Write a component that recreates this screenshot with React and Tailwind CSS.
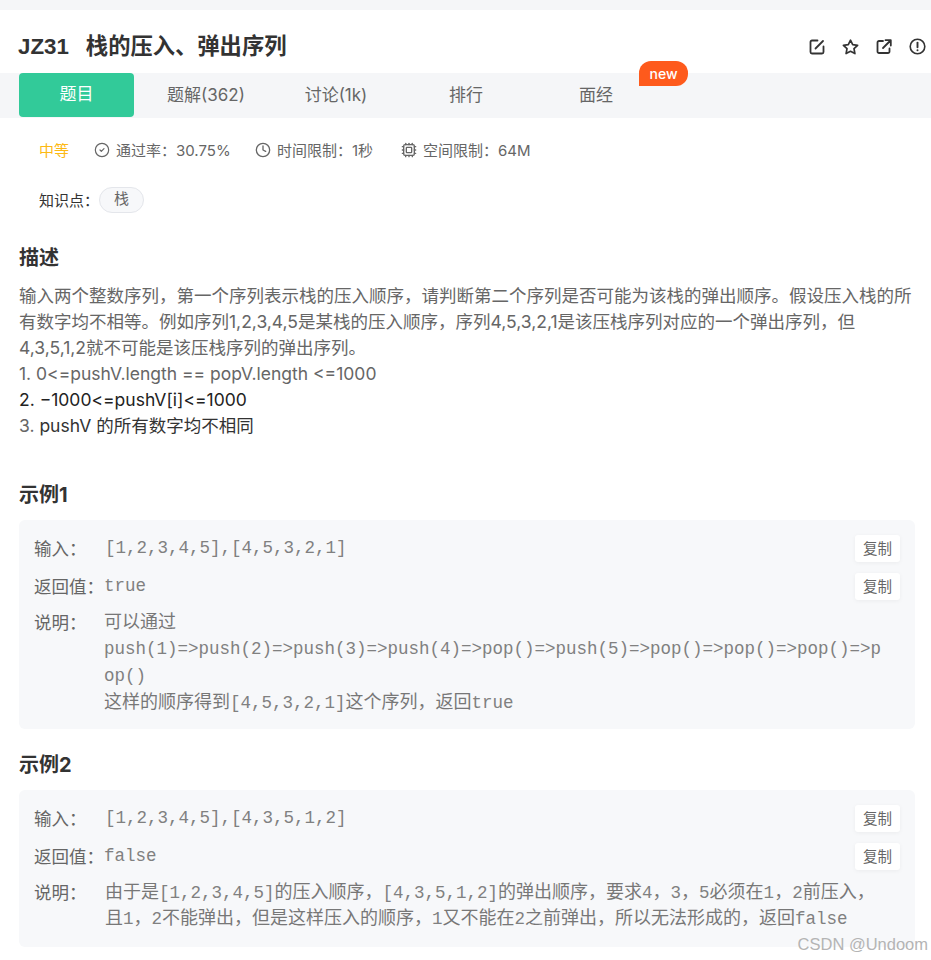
import React from "react";
import { CircleCheck, Clock, Cpu } from "lucide-react";

const sans = "font-['Inter','Noto_Sans_CJK_SC',sans-serif]";
const mono = "font-['Liberation_Mono','Noto_Sans_CJK_SC',monospace]";

const tabs = ["题解(362)", "讨论(1k)", "排行", "面经"];

// header action icons, the lucide ones are too thin and have the wrong shapes
const EditIcon = () => (
  <svg width="16" height="16" viewBox="0 0 16 16" fill="none" stroke="currentColor" strokeWidth="1.8" strokeLinecap="round" strokeLinejoin="round">
    <path d="M8.5 1.5H3A1.5 1.5 0 0 0 1.5 3v10A1.5 1.5 0 0 0 3 14.5h10a1.5 1.5 0 0 0 1.5-1.5V7.5" />
    <path d="M6.5 9.5 14 2" />
  </svg>
);
const StarIcon = () => (
  <svg width="17" height="16" viewBox="0 0 17 16" fill="none" stroke="currentColor" strokeWidth="1.7" strokeLinejoin="round">
    <path d="M8.5 1.2 10.7 5.6 15.6 6.3 12 9.7 12.9 14.6 8.5 12.3 4.1 14.6 5 9.7 1.4 6.3 6.3 5.6Z" />
  </svg>
);
const ShareIcon = () => (
  <svg width="16" height="16" viewBox="0 0 16 16" fill="none" stroke="currentColor" strokeWidth="1.8" strokeLinecap="round" strokeLinejoin="round">
    <path d="M7 2H3A1.5 1.5 0 0 0 1.5 3.5v9A1.5 1.5 0 0 0 3 14h9a1.5 1.5 0 0 0 1.5-1.5V9.5" />
    <path d="M7 9 14.5 1.5M9.5 1.2h5.3v5.3" />
  </svg>
);
const AlertIcon = () => (
  <svg width="17" height="17" viewBox="0 0 17 17" fill="none" stroke="currentColor" strokeWidth="1.6" strokeLinecap="round">
    <circle cx="8.5" cy="8.5" r="7.3" />
    <path d="M8.5 4.6v4.6" strokeWidth="1.9" />
    <path d="M8.5 12.2v.1" strokeWidth="2" />
  </svg>
);

const CopyButton = () => (
  <button className="w-[45px] h-[27px] bg-white rounded-[3px] text-[14.5px] text-[#666] shadow-[0_1px_4px_rgba(0,0,0,0.05)]">
    复制
  </button>
);

const Row = ({ label, children, copy, className }) => (
  <div className={`flex ${className}`}>
    <div className="w-[70px] shrink-0 text-[17.5px] leading-[27px] text-[#666]">{label}</div>
    <div className={`flex-1 text-[#808080] text-[17.5px] ${mono}`}>{children}</div>
    {copy && <CopyButton />}
  </div>
);

const Cn = ({ children }) => <span className="text-[18px] text-[#777]">{children}</span>;

const Example = ({ title, children, className }) => (
  <section>
    <h3 className="text-[20px] leading-[28px] font-bold text-[#333] mb-[11px]">{title}</h3>
    <div className={`bg-[#f7f8fa] rounded-[6px] px-[15px] pt-[15px] ${className}`}>{children}</div>
  </section>
);

export default function App() {
  return (
    <div className={`w-[931px] h-[960px] overflow-hidden bg-white relative ${sans}`}>
      <div className="h-[10px] bg-[#f5f6f8]" />
      <div className="h-[63px] flex items-center justify-between pl-[18px] pr-[5px] pt-[10px]">
        <h1 className="text-[22.3px] font-bold text-[#333] flex gap-[17px] font-['Liberation_Sans','Noto_Sans_CJK_SC',sans-serif]">
          <span>JZ31</span>
          <span>栈的压入、弹出序列</span>
        </h1>
        <div className="flex items-center gap-[17px] text-[#333]">
          <EditIcon />
          <StarIcon />
          <ShareIcon />
          <AlertIcon />
        </div>
      </div>
      <div className="h-[45px] bg-[#f5f6f8] flex pl-[19px] relative">
        <div className="w-[115px] h-[44px] bg-[#32ca99] rounded-[4px] text-white text-[17px] flex items-center justify-center mr-[7px]">题目</div>
        {tabs.map((t) => (
          <div key={t} className="w-[130px] pt-[1px] flex items-center justify-center text-[17px] text-[#666] h-[44px]">{t}</div>
        ))}
        <span className="absolute left-[639px] -top-[12px] w-[49px] h-[25px] bg-[#fe5a1c] text-white text-[14px] font-medium flex items-center justify-center rounded-t-[12px] rounded-br-[12px]">new</span>
      </div>

      <div className="flex items-center h-[66px] pl-[39px] text-[15px] text-[#666]">
        <span className="text-[#fdb913] w-[55px]">中等</span>
        <span className="flex items-center gap-[6px] w-[161px]"><CircleCheck size={16} strokeWidth={1.8} className="-mt-[2px]" />通过率：30.75%</span>
        <span className="flex items-center gap-[6px] w-[146px]"><Clock size={16} strokeWidth={2} className="-mt-[2px]" />时间限制：1秒</span>
        <span className="flex items-center gap-[6px]"><Cpu size={16} strokeWidth={2} className="-mt-[2px]" />空间限制：64M</span>
      </div>
      <div className="flex items-center pl-[39px] text-[15px] text-[#333] h-[26px] mt-[3px] mb-[31px]">
        <span className="pt-[3px]">知识点：</span>
        <span className="w-[45px] h-[26px] pb-[2px] rounded-full border border-[#e4e6eb] bg-[#f7f8fa] text-[#666] flex items-center justify-center">栈</span>
      </div>

      <div className="pl-[19px] pr-[16px]">
        <h3 className="text-[20px] leading-[28px] font-bold text-[#333]">描述</h3>
        <div className="mt-[11px] text-[17.5px] leading-[26px] text-[#666]">
          <p>输入两个整数序列，第一个序列表示栈的压入顺序，请判断第二个序列是否可能为该栈的弹出顺序。假设压入栈的所有数字均不相等。例如序列1,2,3,4,5是某栈的压入顺序，序列4,5,3,2,1是该压栈序列对应的一个弹出序列，但4,3,5,1,2就不可能是该压栈序列的弹出序列。</p>
          <p>1. 0&lt;=pushV.length == popV.length &lt;=1000</p>
          <p className="text-[#222]">2. −1000&lt;=pushV[i]&lt;=1000</p>
          <p className="text-[#333]"><span className="text-[#666]">3. </span>pushV 的所有数字均不相同</p>
        </div>

        <div className="mt-[42px] flex flex-col gap-[22px]">
          <Example title="示例1" className="pb-[13px]">
            <Row label="输入：" copy className="mb-[11px]">
              <span className="pl-[1px] leading-[27px]">[1,2,3,4,5],[4,5,3,2,1]</span>
            </Row>
            <Row label="返回值：" copy className="mb-[9px]">
              <span className="leading-[27px]">true</span>
            </Row>
            <Row label="说明：">
              <p className="leading-[26px] pt-[1px] box-content"><Cn>可以通过</Cn></p>
              <p className="leading-[27px] pr-[12px] break-all">push(1)=&gt;push(2)=&gt;push(3)=&gt;push(4)=&gt;pop()=&gt;push(5)=&gt;pop()=&gt;pop()=&gt;pop()=&gt;pop()</p>
              <p className="leading-[26px]"><Cn>这样的顺序得到</Cn>[4,5,3,2,1]<Cn>这个序列，返回</Cn>true</p>
            </Row>
          </Example>
          <Example title="示例2" className="pb-[15px]">
            <Row label="输入：" copy className="mb-[11px]">
              <span className="pl-[1px] leading-[27px]">[1,2,3,4,5],[4,3,5,1,2]</span>
            </Row>
            <Row label="返回值：" copy className="mb-[9px]">
              <span className="leading-[27px]">false</span>
            </Row>
            <Row label="说明：">
              <p className="leading-[26px] pt-[1px] pl-[1px] box-content"><Cn>由于是</Cn>[1,2,3,4,5]<Cn>的压入顺序，</Cn>[4,3,5,1,2]<Cn>的弹出顺序，要求</Cn>4<Cn>，</Cn>3<Cn>，</Cn>5<Cn>必须在</Cn>1<Cn>，</Cn>2<Cn>前压入，</Cn></p>
              <p className="leading-[26px] pl-[1px]"><Cn>且</Cn>1<Cn>，</Cn>2<Cn>不能弹出，但是这样压入的顺序，</Cn>1<Cn>又不能在</Cn>2<Cn>之前弹出，所以无法形成的，返回</Cn>false</p>
            </Row>
          </Example>
        </div>
      </div>
      <span className="absolute right-[3px] bottom-[6px] text-[16.5px] leading-[20px] text-[#b4b4b4] font-['Liberation_Sans',sans-serif]">CSDN @Undoom</span>
    </div>
  );
}
